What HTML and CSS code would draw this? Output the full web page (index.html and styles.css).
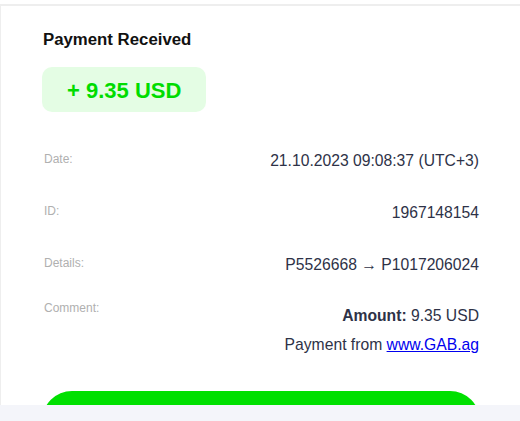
FILE: index.html
```html
<!DOCTYPE html>
<html lang="en">
<head>
    <meta charset="UTF-8">
    <meta name="viewport" content="width=device-width, initial-scale=1.0">
    <title>Payment Received</title>
    <link rel="stylesheet" href="styles.css">
</head>
<body>
    <div class="top-strip"></div>
    <div class="card">
        <h1 class="title">Payment Received</h1>
        <div class="amount-badge">+ 9.35 USD</div>

        <div class="details">
            <div class="row">
                <span class="label">Date:</span>
                <span class="value">21.10.2023 09:08:37 (UTC+3)</span>
            </div>
            <div class="row">
                <span class="label">ID:</span>
                <span class="value">1967148154</span>
            </div>
            <div class="row">
                <span class="label">Details:</span>
                <span class="value">P5526668 &rarr; P1017206024</span>
            </div>
            <div class="row row-comment">
                <span class="label">Comment:</span>
                <div class="value value-multi">
                    <div><b>Amount:</b> 9.35 USD</div>
                    <div>Payment from <a href="#">www.GAB.ag</a></div>
                </div>
            </div>
        </div>

        <button class="main-btn" aria-label="Continue"></button>
    </div>
</body>
</html>
```

FILE: styles.css
```css
body {
    margin: 0;
    font-family: "Liberation Sans", Arial, sans-serif;
    background-color: #f4f5fa;
    overflow: hidden;
}
.top-strip {
    height: 4px;
    background-color: #ffffff;
}
.card {
    box-sizing: border-box;
    height: 401px;
    background-color: #ffffff;
    border-top: 2px solid #eeeeee;
    border-left: 1px solid #eeeeee;
    padding: 24px 40px 0 41px;
    overflow: hidden;
}
.title {
    margin: 0;
    padding-left: 1px;
    font-size: 16.8px;
    line-height: 20px;
    font-weight: bold;
    color: #111111;
}
.amount-badge {
    display: inline-block;
    margin-top: 17px;
    padding: 12px 25px 9px;
    line-height: 24px;
    font-size: 22px;
    font-weight: bold;
    color: #00dc00;
    background-color: #e4fde4;
    border-radius: 10px;
}
.details {
    margin-top: 40px;
    padding-right: 1px;
}
.row {
    display: flex;
    justify-content: space-between;
    align-items: flex-start;
    margin-bottom: 34px;
}
.row-comment {
    margin-top: -7px;
    margin-bottom: 32px;
}
.label {
    padding-left: 2px;
    font-size: 12px;
    line-height: 14px;
    color: #b0b0b0;
}
.value {
    font-size: 15.7px;
    line-height: 18px;
    color: #2e3247;
    text-align: right;
}
.value-multi {
    line-height: 29px;
}
.value-multi b {
    font-weight: bold;
}
.value a {
    color: #0000ee;
    text-decoration: underline;
}
.main-btn {
    display: block;
    width: 100%;
    height: 60px;
    border: none;
    border-radius: 30px;
    background-color: #00e000;
    cursor: pointer;
}
```
